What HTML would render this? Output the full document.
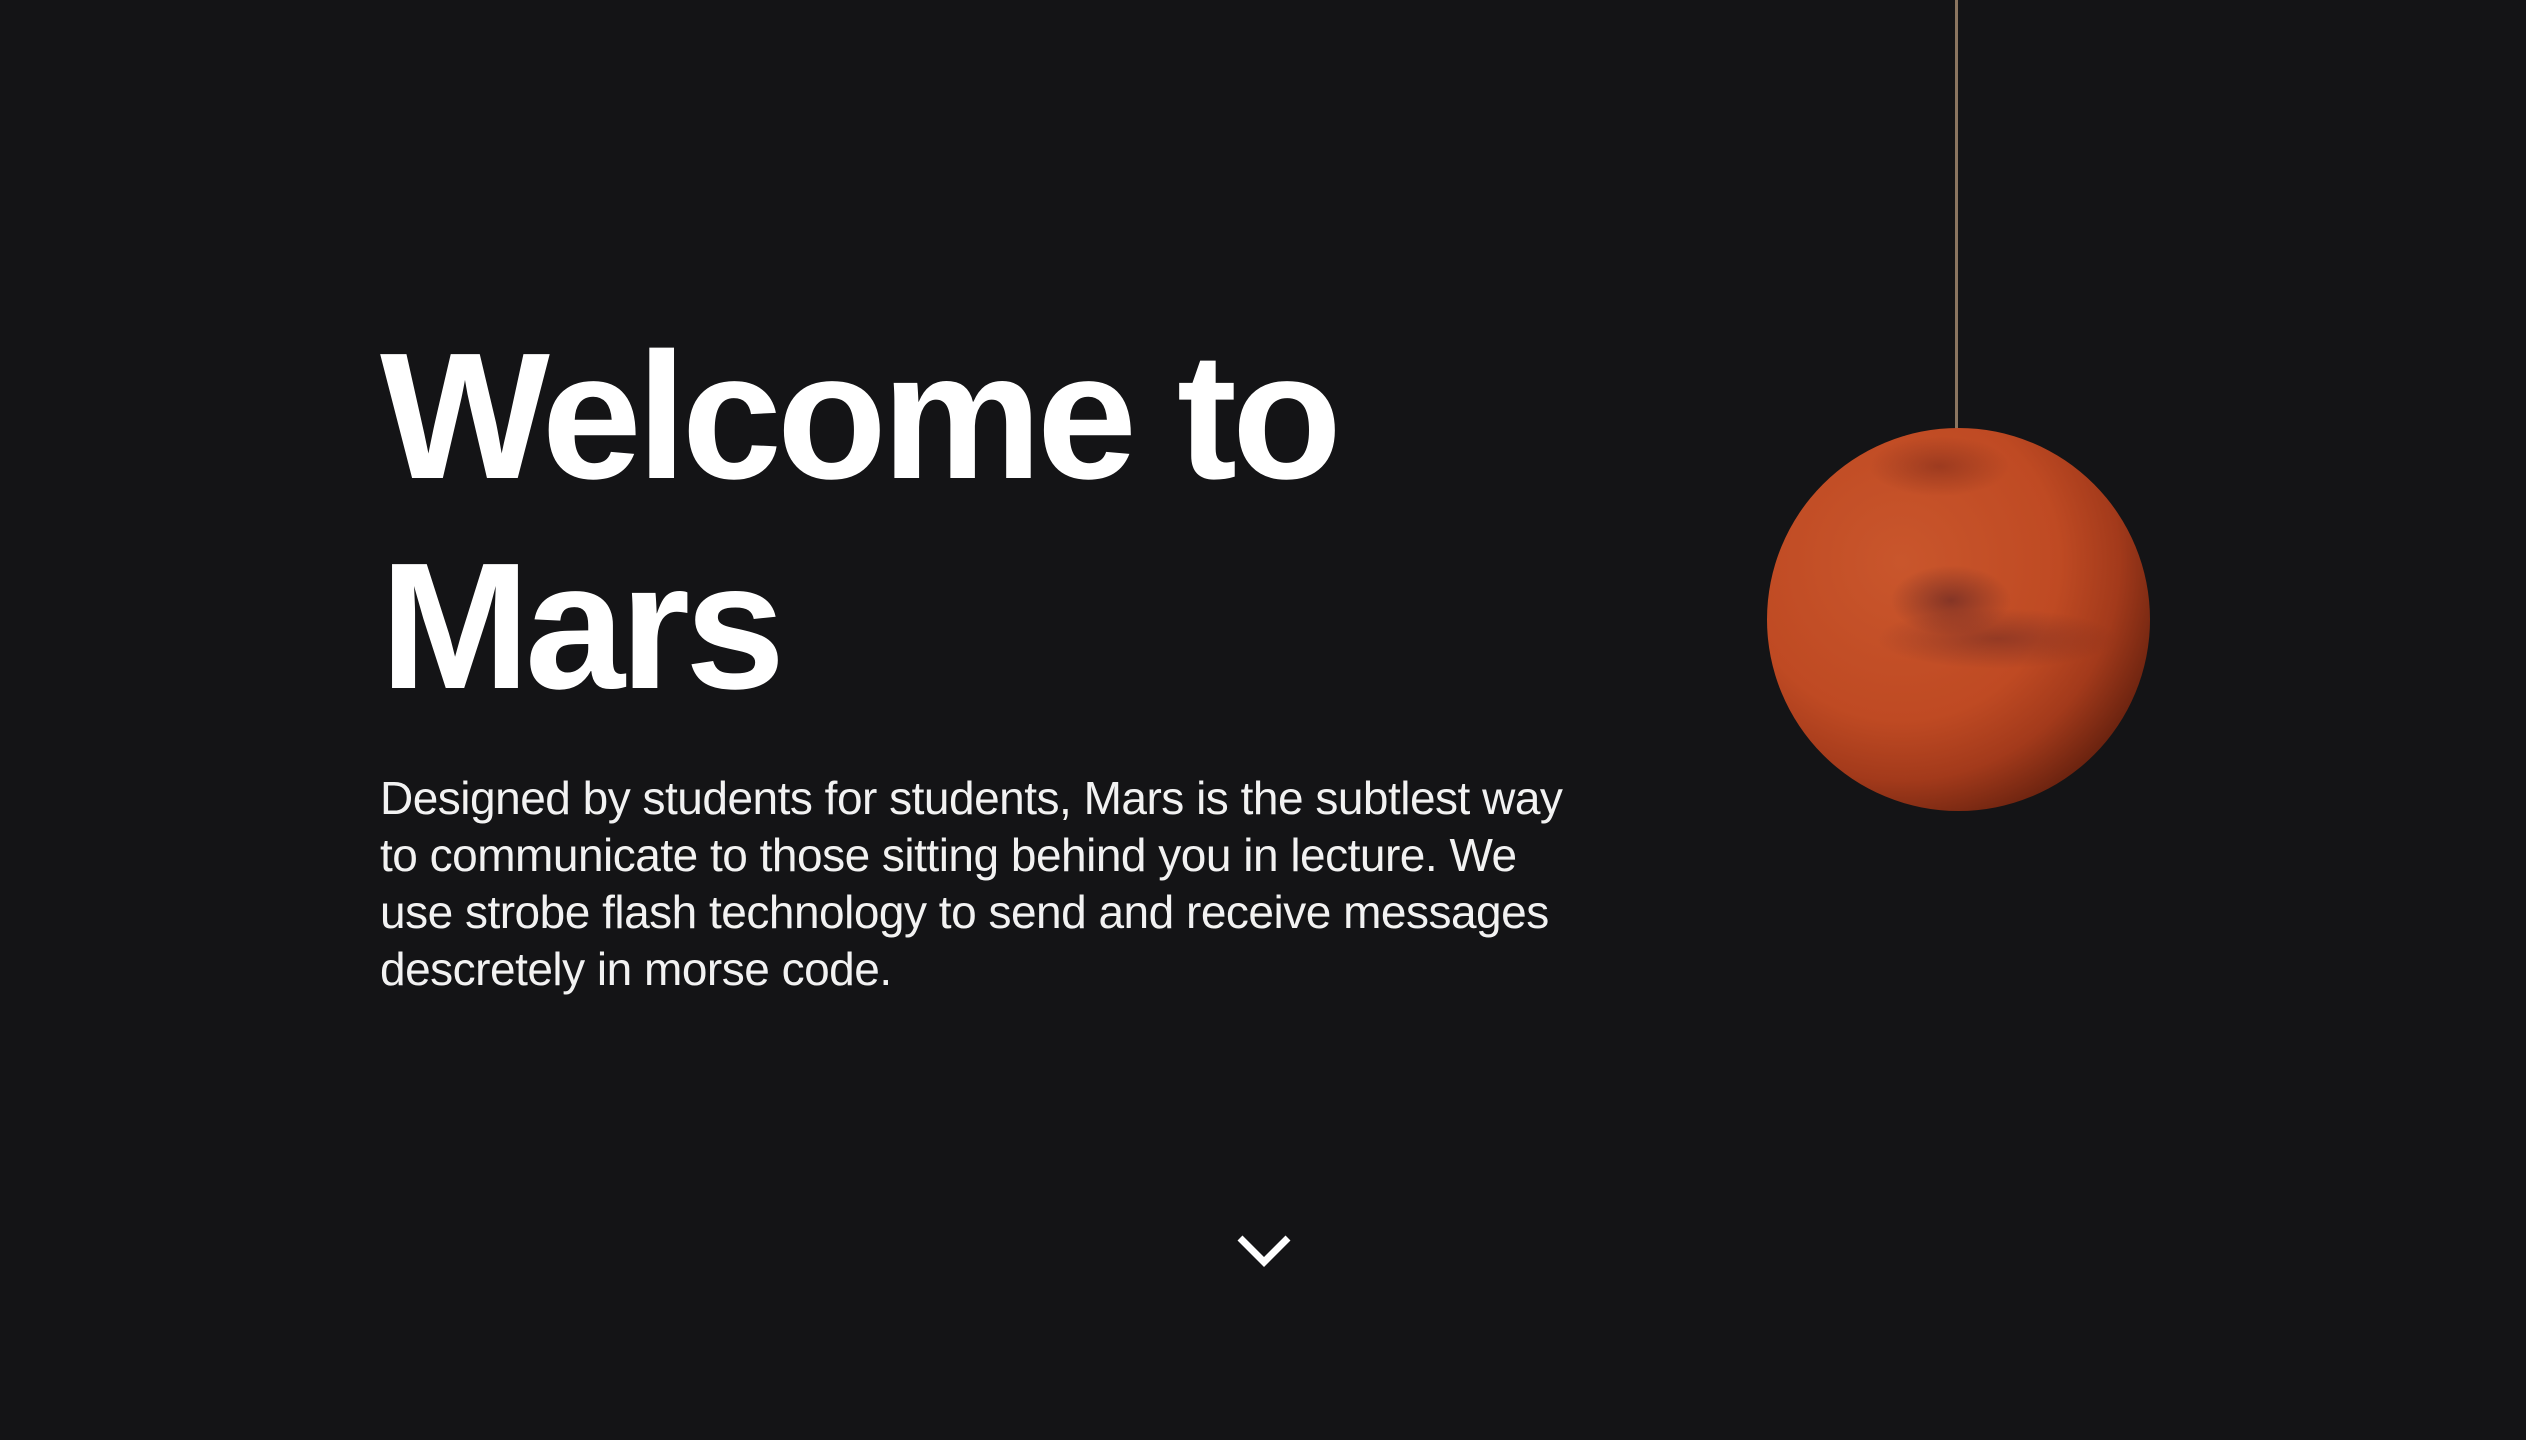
<!DOCTYPE html>
<html><head><meta charset="utf-8"><style>
html,body{margin:0;padding:0;width:2526px;height:1440px;background:#141416;overflow:hidden;font-family:"Liberation Sans",sans-serif;color:#fff}
h1{position:absolute;left:380px;top:312px;margin:0;font-size:180px;line-height:210px;font-weight:bold;letter-spacing:-5px}
p{position:absolute;left:380px;top:770px;margin:0;width:1200px;font-size:46px;line-height:57px;color:#f2f2f2;letter-spacing:-0.5px}
.string{position:absolute;left:1955px;top:0;width:3px;height:430px;background:#8a7560}
.planet{position:absolute;left:1767px;top:428px;width:383px;height:383px;border-radius:50%;
background:
radial-gradient(ellipse 60px 35px at 48% 45%,rgba(80,30,35,.55),rgba(0,0,0,0)),
radial-gradient(ellipse 120px 30px at 60% 55%,rgba(80,30,35,.4),rgba(0,0,0,0)),
radial-gradient(ellipse 70px 30px at 45% 10%,rgba(120,40,25,.5),rgba(0,0,0,0)),
radial-gradient(circle at 35% 35%,#c9562c 0%,#bf4a23 45%,#a33a1b 62%,#5a1c0c 82%,#150706 100%)}
</style></head><body>
<h1>Welcome to<br>Mars</h1>
<p>Designed by students for students, Mars is the subtlest way to communicate to those sitting behind you in lecture. We use strobe flash technology to send and receive messages descretely in morse code.</p>
<div class="string"></div>
<div class="planet"></div>
<svg style="position:absolute;left:1236px;top:1232px" width="56" height="36" viewBox="0 0 56 36"><path d="M4 6 L28 30 L52 6" fill="none" stroke="#fff" stroke-width="7"/></svg>
</body></html>
